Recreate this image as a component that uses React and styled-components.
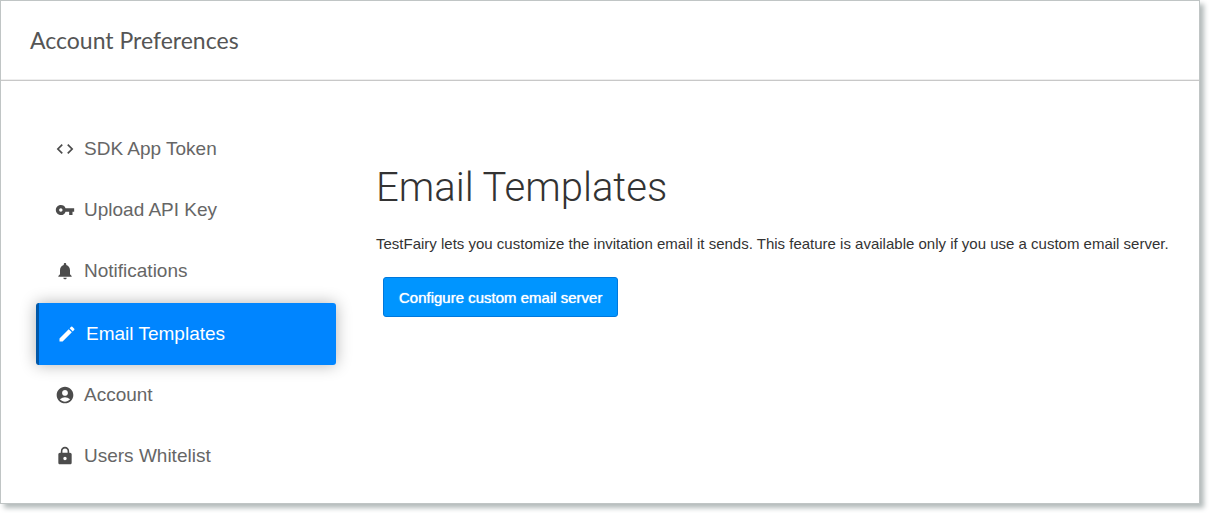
import React from "react";
import styled, { createGlobalStyle } from "styled-components";
import {
  MdCode,
  MdVpnKey,
  MdNotifications,
  MdEdit,
  MdAccountCircle,
  MdLock,
} from "react-icons/md";

const GlobalStyle = createGlobalStyle`
  * { box-sizing: border-box; }
  body {
    margin: 0;
    background: #fff;
    color: #333;
    font-family: "Liberation Sans", Arial, sans-serif;
    font-size: 15px;
  }
`;

const Frame = styled.div`
  margin: 0 9px 9px 0;
  border: 1px solid #c0c5c5;
  background: #fff;
  box-shadow: 4px 4px 5px #b4bbbb;
`;

const Header = styled.header`
  display: flex;
  align-items: center;
  height: 80px;
  padding: 0 29px 2px;
  border-bottom: 1px solid #c8c8c8;
  box-shadow: inset 0 -1px #eee;
`;

const PageTitle = styled.h1`
  margin: 0;
  color: #555;
  font-family: Lato, sans-serif;
  font-size: 23px;
  font-weight: 400;
  line-height: 28px;
`;

const Body = styled.div`
  display: flex;
  align-items: flex-start;
  gap: 40px;
  padding: 38px 24px 16px 35px;
`;

const Nav = styled.nav`
  flex: 0 0 300px;
`;

const NavLink = styled.a`
  display: flex;
  align-items: center;
  gap: 9px;
  height: ${({ $active }) => ($active ? 62 : 60)}px;
  margin: ${({ $active }) => ($active ? "2px 0 0" : "0 0 1px")};
  padding-left: ${({ $active }) => ($active ? 18 : 19)}px;
  border-left: ${({ $active }) => ($active ? "3px solid #0057a8" : "0")};
  border-radius: 3px;
  background: ${({ $active }) => ($active ? "#0085ff" : "transparent")};
  box-shadow: ${({ $active }) => ($active ? "0 0 16px rgba(0, 0, 0, 0.3)" : "none")};
  color: ${({ $active }) => ($active ? "#fff" : "#666")};
  font-size: 19px;
  line-height: 24px;
  text-decoration: none;

  svg {
    flex: none;
    width: 20px;
    height: 20px;
    color: ${({ $active }) => ($active ? "#fff" : "#4c4c4c")};
  }
`;

const Content = styled.main`
  flex: 1;
  min-width: 0;
  padding-top: 45px;
`;

const Heading = styled.h2`
  margin: 0;
  font-family: Roboto, sans-serif;
  font-size: 40px;
  font-weight: 300;
  line-height: 48px;
`;

const Description = styled.p`
  margin: 22px 0 23px;
  line-height: 20px;
`;

const PrimaryButton = styled.button`
  height: 40px;
  margin-left: 7px;
  padding: 0 15px;
  border: 1px solid #0078dc;
  border-radius: 3px;
  background: #0095ff;
  color: #fff;
  font: inherit;
  text-shadow: 0 0 1px #fff;
`;

const items = [
  { label: "SDK App Token", Icon: MdCode },
  { label: "Upload API Key", Icon: MdVpnKey },
  { label: "Notifications", Icon: MdNotifications },
  { label: "Email Templates", Icon: MdEdit, active: true },
  { label: "Account", Icon: MdAccountCircle },
  { label: "Users Whitelist", Icon: MdLock },
];

export default function App() {
  return (
    <>
      <GlobalStyle />
      <Frame>
        <Header>
          <PageTitle>Account Preferences</PageTitle>
        </Header>
        <Body>
          <Nav>
            {items.map(({ label, Icon, active }) => (
              <NavLink
                key={label}
                href="#"
                $active={active}
                aria-current={active ? "page" : undefined}
              >
                <Icon aria-hidden="true" />
                {label}
              </NavLink>
            ))}
          </Nav>
          <Content>
            <Heading>Email Templates</Heading>
            <Description>
              TestFairy lets you customize the invitation email it sends. This
              feature is available only if you use a custom email server.
            </Description>
            <PrimaryButton type="button">
              Configure custom email server
            </PrimaryButton>
          </Content>
        </Body>
      </Frame>
    </>
  );
}
